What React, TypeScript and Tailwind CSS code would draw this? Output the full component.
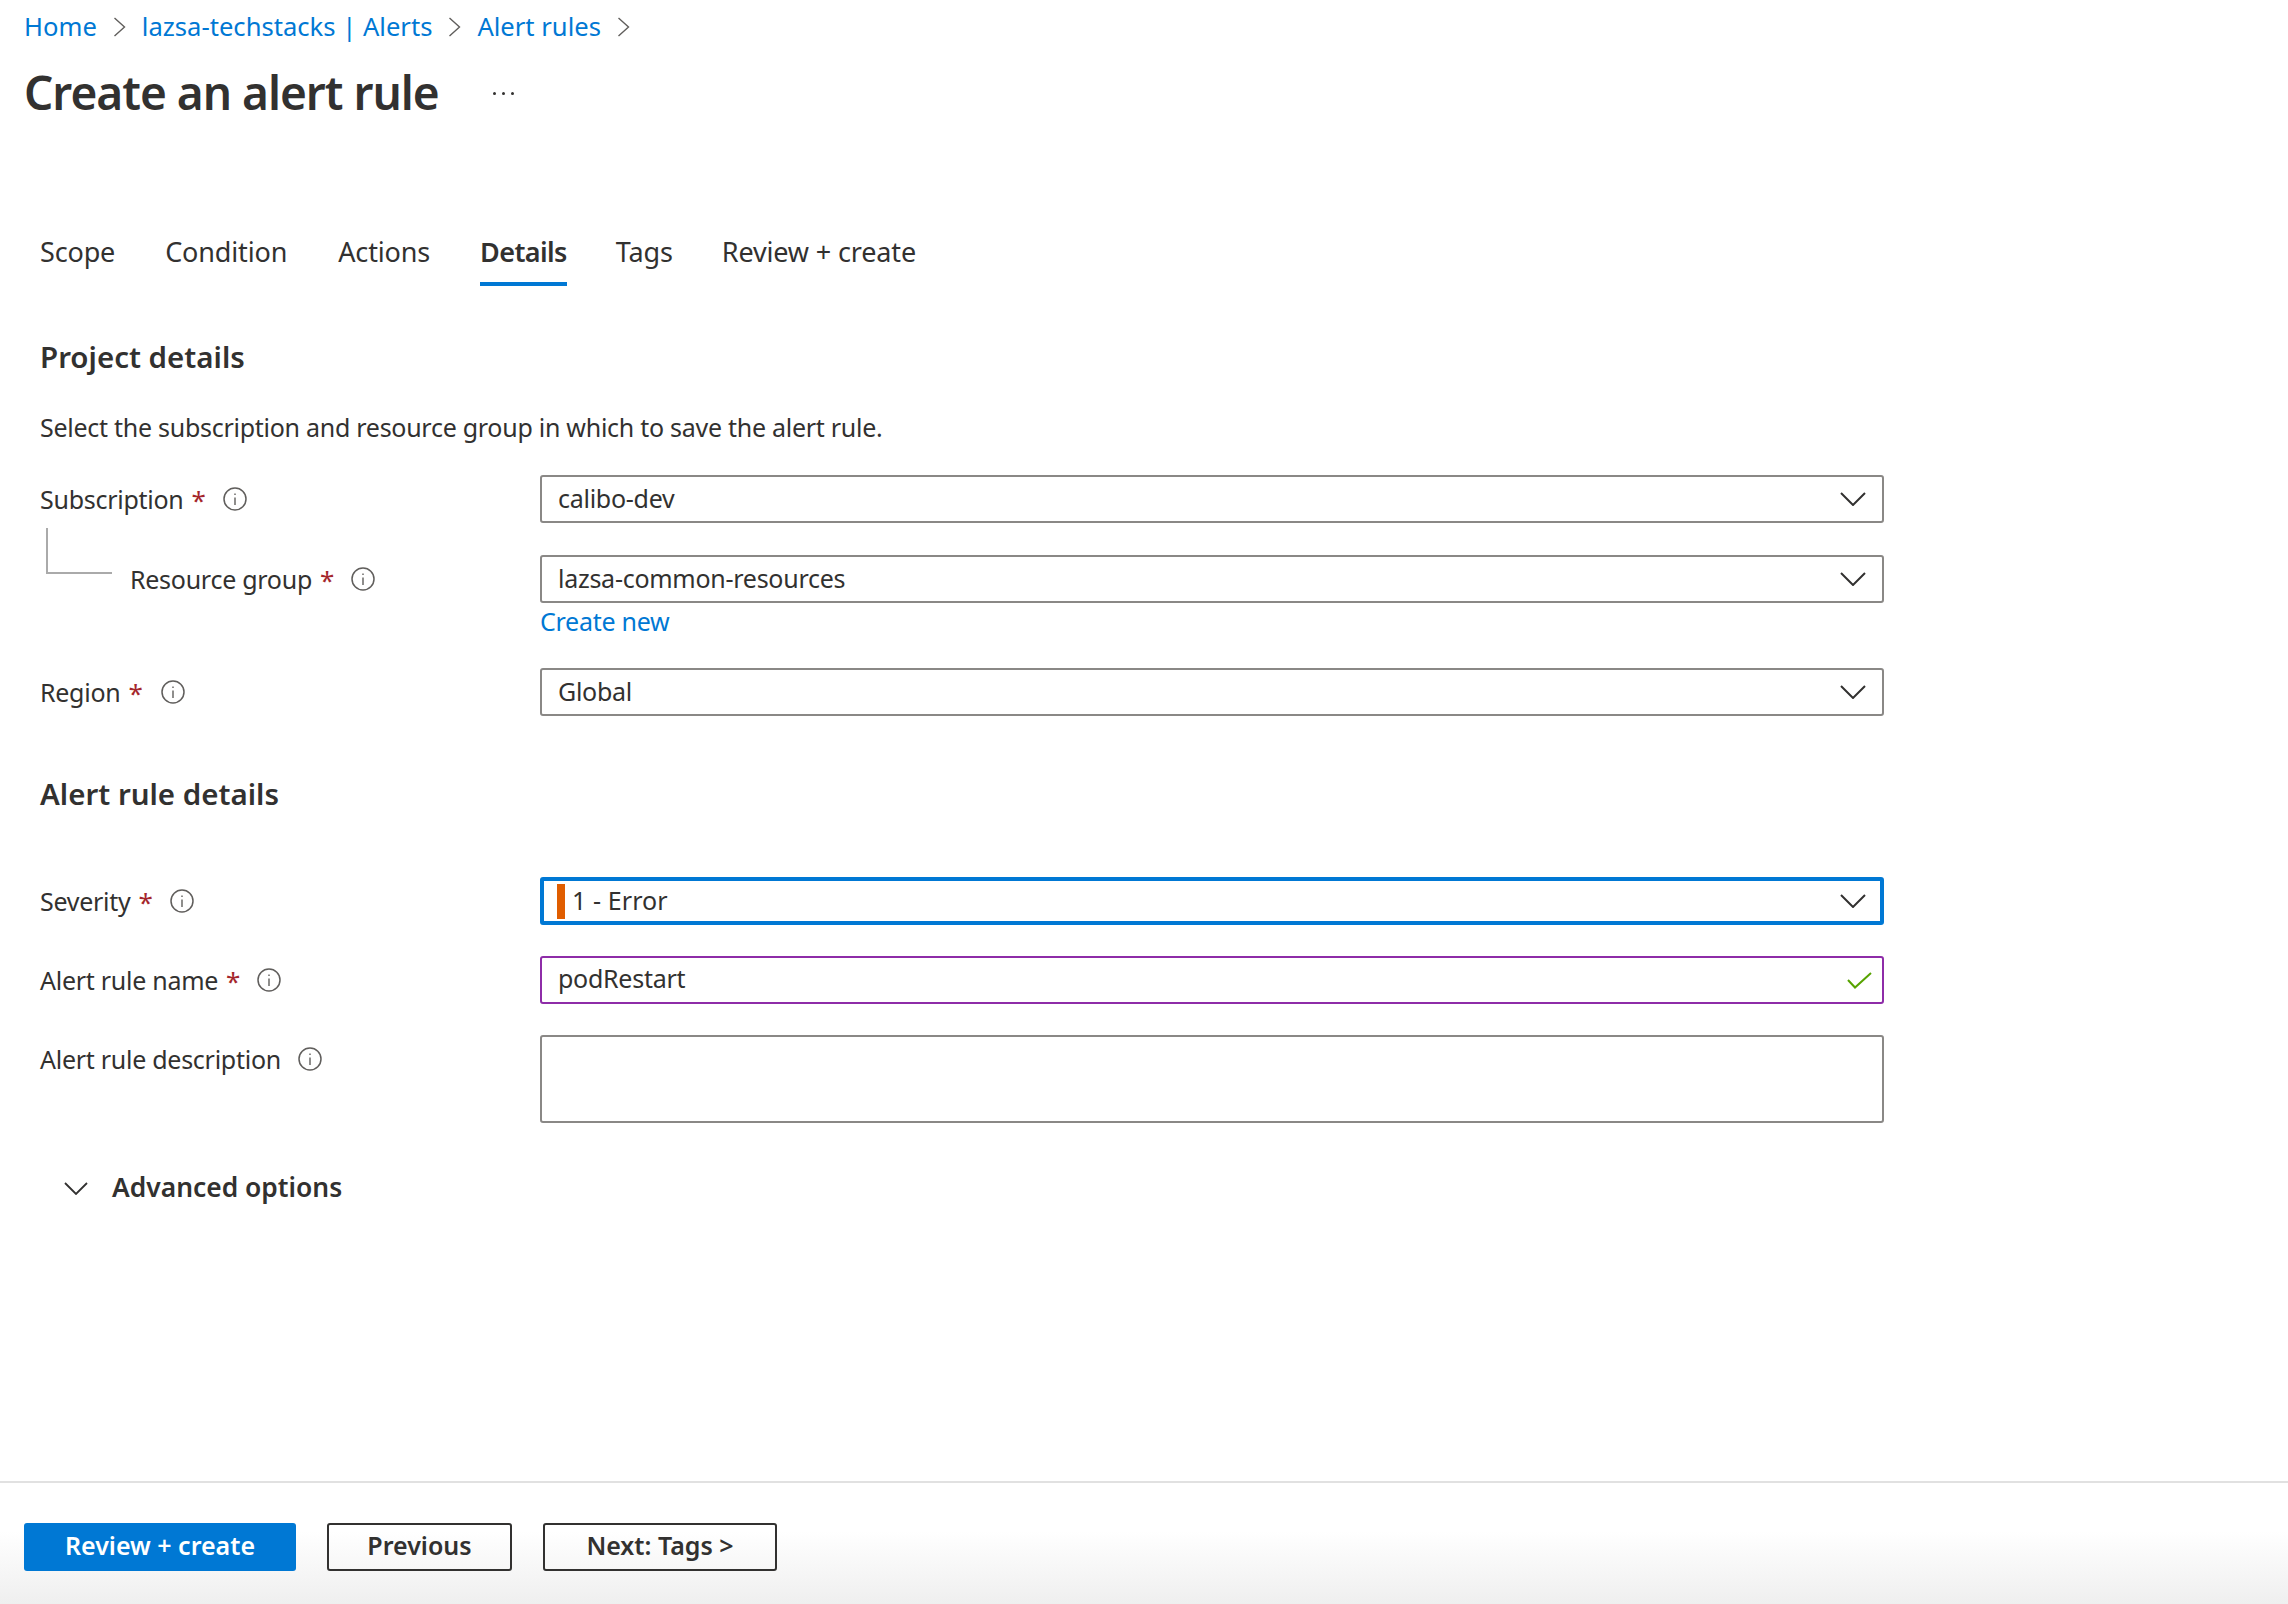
import type { ReactNode } from "react";

function InfoIcon() {
  return (
    <svg width="24" height="24" viewBox="0 0 24 24" fill="none" className="shrink-0">
      <circle cx="12" cy="12" r="11" stroke="#605e5c" strokeWidth="1.5" />
      <path d="M12 10.5V18M12 6.5V8" stroke="#605e5c" strokeWidth="1.4" />
    </svg>
  );
}

function ChevronDown() {
  return (
    <svg width="26" height="14" viewBox="0 0 26 14" fill="none" className="shrink-0">
      <path d="M1 1L13 13L25 1" stroke="#323130" strokeWidth="2" />
    </svg>
  );
}

function Crumb({ children }: { children: ReactNode }) {
  return (
    <>
      <a className="text-[#0078d4]">{children}</a>
      <svg width="13" height="20" viewBox="0 0 13 20" fill="none" className="mx-4 shrink-0">
        <path d="M1.5 1L11.5 10L1.5 19" stroke="#605e5c" strokeWidth="1.4" />
      </svg>
    </>
  );
}

function FieldLabel({ text, required, gap }: { text: string; required?: boolean; gap: string }) {
  return (
    <div className="flex items-center">
      <span className="mt-[1px]">{text}</span>
      {required ? <span className="ml-[8px] mt-[2px] text-[26px] text-[#a4262c]">*</span> : null}
      <span className={gap}>
        <InfoIcon />
      </span>
    </div>
  );
}

function Dropdown({ value }: { value: string }) {
  return (
    <div className="flex h-12 w-[1344px] items-center justify-between rounded-[3px] border-2 border-[#8a8886] pl-4 pr-4">
      <span>{value}</span>
      <ChevronDown />
    </div>
  );
}

function Button({ label, width }: { label: string; width: string }) {
  return (
    <button
      className={`h-12 rounded-[3px] border-2 border-[#323130] pb-[2px] text-center text-[25px] font-semibold text-[#323130] ${width}`}
    >
      {label}
    </button>
  );
}

const tabs = [
  { label: "Scope", extra: "border-transparent tracking-[-0.15px]" },
  { label: "Condition", extra: "border-transparent tracking-[-0.15px]" },
  { label: "Actions", extra: "ml-[1px] border-transparent tracking-[-0.15px]" },
  { label: "Details", extra: "border-[#0078d4] font-semibold tracking-[-0.6px]" },
  { label: "Tags", extra: "-ml-[1px] border-transparent tracking-[-0.15px]" },
  { label: "Review + create", extra: "-ml-[1px] border-transparent tracking-[-0.15px]" },
];

export default function App() {
  return (
    <div className="flex h-[1604px] w-full flex-col overflow-hidden bg-white font-['Noto_Sans',sans-serif] text-[25px] tracking-[-0.27px] text-[#323130]">
      <div className="pl-6 pt-[9px]">
        <nav className="flex h-9 items-center text-[25.6px] leading-9 tracking-normal">
          <Crumb>Home</Crumb>
          <Crumb>lazsa-techstacks | Alerts</Crumb>
          <Crumb>Alert rules</Crumb>
        </nav>
        <div className="mt-[15px] flex h-[64px] items-center">
          <h1 className="text-[46px] font-semibold leading-[64px] tracking-[-1px]">Create an alert rule</h1>
          <div className="ml-[54px] mt-[2px] flex gap-[6px]">
            <span className="h-[3px] w-[3px] rounded-full bg-[#323130]" />
            <span className="h-[3px] w-[3px] rounded-full bg-[#323130]" />
            <span className="h-[3px] w-[3px] rounded-full bg-[#323130]" />
          </div>
        </div>
      </div>

      <div className="mt-[102px] flex gap-[50px] pl-10">
        {tabs.map((tab) => (
          <div key={tab.label} className={`h-[60px] border-b-4 text-[27px] leading-[52px] ${tab.extra}`}>
            {tab.label}
          </div>
        ))}
      </div>

      <div className="px-10">
        <h2 className="mt-[51px] h-10 text-[29.5px] font-semibold leading-10 tracking-normal">Project details</h2>
        <p className="mt-[30px] h-10 leading-10">
          Select the subscription and resource group in which to save the alert rule.
        </p>

        <div className="mt-[28px] flex items-center">
          <div className="w-[500px]">
            <FieldLabel text="Subscription" required gap="ml-[17px]" />
          </div>
          <Dropdown value="calibo-dev" />
        </div>

        <div className="mt-8 flex items-center">
          <div className="relative w-[500px] pl-[90px]">
            <span className="absolute -top-[31px] left-[6px] h-[46px] w-[66px] border-b-2 border-l-2 border-[#aaaaaa]" />
            <FieldLabel text="Resource group" required gap="ml-[17px]" />
          </div>
          <Dropdown value="lazsa-common-resources" />
        </div>
        <div className="h-[38px] pl-[500px] leading-[36px] text-[#0078d4]">Create new</div>

        <div className="mt-[27px] flex items-center">
          <div className="w-[500px]">
            <FieldLabel text="Region" required gap="ml-[18px]" />
          </div>
          <Dropdown value="Global" />
        </div>

        <h2 className="mt-[58px] h-10 text-[29.5px] font-semibold leading-10 tracking-normal">Alert rule details</h2>

        <div className="mt-[63px] flex items-center">
          <div className="w-[500px]">
            <FieldLabel text="Severity" required gap="ml-[17px]" />
          </div>
          <div className="flex h-12 w-[1344px] items-center justify-between rounded-[3px] border-4 border-[#0078d4] pl-[13px] pr-[14px]">
            <div className="flex items-center gap-[7px] tracking-[0.1px]">
              <span className="h-[35px] w-[8px] bg-[#e05d00]" />
              <span>1 - Error</span>
            </div>
            <ChevronDown />
          </div>
        </div>

        <div className="mt-[31px] flex items-center">
          <div className="w-[500px]">
            <FieldLabel text="Alert rule name" required gap="ml-[17px]" />
          </div>
          <div className="flex h-12 w-[1344px] items-center justify-between rounded-[3px] border-2 border-[#8e2ca8] pl-4 pr-[10px]">
            <span className="-mt-[2px]">podRestart</span>
            <svg width="25" height="17" viewBox="0 0 25 17" fill="none" className="mt-[1px] shrink-0">
              <path d="M1 8L8 15.5L24 1" stroke="#57a300" strokeWidth="2" />
            </svg>
          </div>
        </div>

        <div className="mt-[31px] flex items-start">
          <div className="flex h-12 w-[500px] items-center">
            <FieldLabel text="Alert rule description" gap="ml-[17px]" />
          </div>
          <div className="h-[88px] w-[1344px] rounded-[3px] border-2 border-[#8a8886]" />
        </div>

        <div className="mt-[45px] flex h-10 items-center pl-[24px]">
          <svg width="24" height="13" viewBox="0 0 24 13" fill="none" className="shrink-0">
            <path d="M1 1L12 12L23 1" stroke="#323130" strokeWidth="1.8" />
          </svg>
          <span className="ml-6 text-[26.4px] font-semibold tracking-normal">Advanced options</span>
        </div>
      </div>

      <div className="mt-auto flex h-[123px] gap-[31px] border-t-2 border-[#e1e1e1] bg-gradient-to-b from-white from-40% to-[#efefef] pl-6 pt-[40px] tracking-normal">
        <button className="h-12 w-[272px] rounded-[3px] bg-[#0078d4] pb-[2px] text-[25px] font-semibold text-white">
          Review + create
        </button>
        <Button label="Previous" width="w-[185px]" />
        <Button label="Next: Tags >" width="w-[234px]" />
      </div>
    </div>
  );
}
